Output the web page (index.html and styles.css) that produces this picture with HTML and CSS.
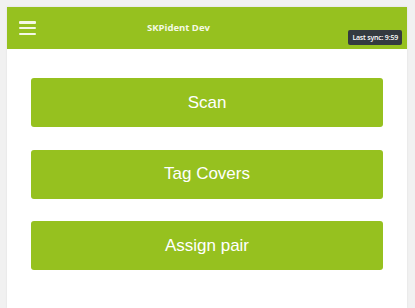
FILE: index.html
```html
<!DOCTYPE html>
<html lang="en">
<head>
    <meta charset="UTF-8">
    <meta name="viewport" content="width=device-width, initial-scale=1.0">
    <title>SKPident Dev</title>
    <link rel="stylesheet" href="styles.css">
</head>
<body>
    <div class="app">
        <!-- Barra superior -->
        <header class="topbar">
            <button class="menu-btn" aria-label="Menu">
                <span></span><span></span><span></span>
            </button>
            <div class="title">SKPident Dev</div>
            <div class="sync">Last sync: 9:59</div>
        </header>

        <!-- Acciones principales -->
        <main class="actions">
            <button class="action">Scan</button>
            <button class="action">Tag Covers</button>
            <button class="action">Assign pair</button>
        </main>
    </div>
</body>
</html>
```

FILE: styles.css
```css
body {
    margin: 0;
    padding: 7px 8px 0 7px;
    background: #f1f1f1;
    height: 308px;
    box-sizing: border-box;
    overflow: hidden;
}

.app {
    background: #fff;
    height: 100%;
    box-shadow: 0 0 2px rgba(0, 0, 0, 0.08);
    display: flex;
    flex-direction: column;
}

.topbar {
    height: 42px;
    background: #96c11f;
    display: flex;
    align-items: center;
    position: relative;
}

.menu-btn {
    background: none;
    border: none;
    padding: 0;
    margin-left: 12px;
    width: 17px;
    height: 14px;
    display: flex;
    flex-direction: column;
    justify-content: space-between;
    cursor: pointer;
}

.menu-btn span {
    display: block;
    height: 2.5px;
    background: #f4f8e6;
    border-radius: 1px;
}

.title {
    margin-left: 111px;
    margin-top: -2px;
    font-family: "Open Sans", sans-serif;
    font-weight: bold;
    font-size: 9.5px;
    color: #f4f9e4;
}

.sync {
    position: absolute;
    right: 5px;
    top: 23px;
    background: #343a40;
    color: #fff;
    font-family: "Open Sans", sans-serif;
    font-size: 7px;
    font-weight: 600;
    padding: 3px 4px;
    border-radius: 2px;
    letter-spacing: -0.2px;
}

.actions {
    padding: 29px 24px 0 24px;
    display: flex;
    flex-direction: column;
    gap: 22.5px;
}

.action {
    height: 49px;
    background: #96c11f;
    border: none;
    border-radius: 3px;
    color: #fff;
    font-family: "Liberation Sans", Arial, sans-serif;
    font-size: 17px;
    cursor: pointer;
}
```
